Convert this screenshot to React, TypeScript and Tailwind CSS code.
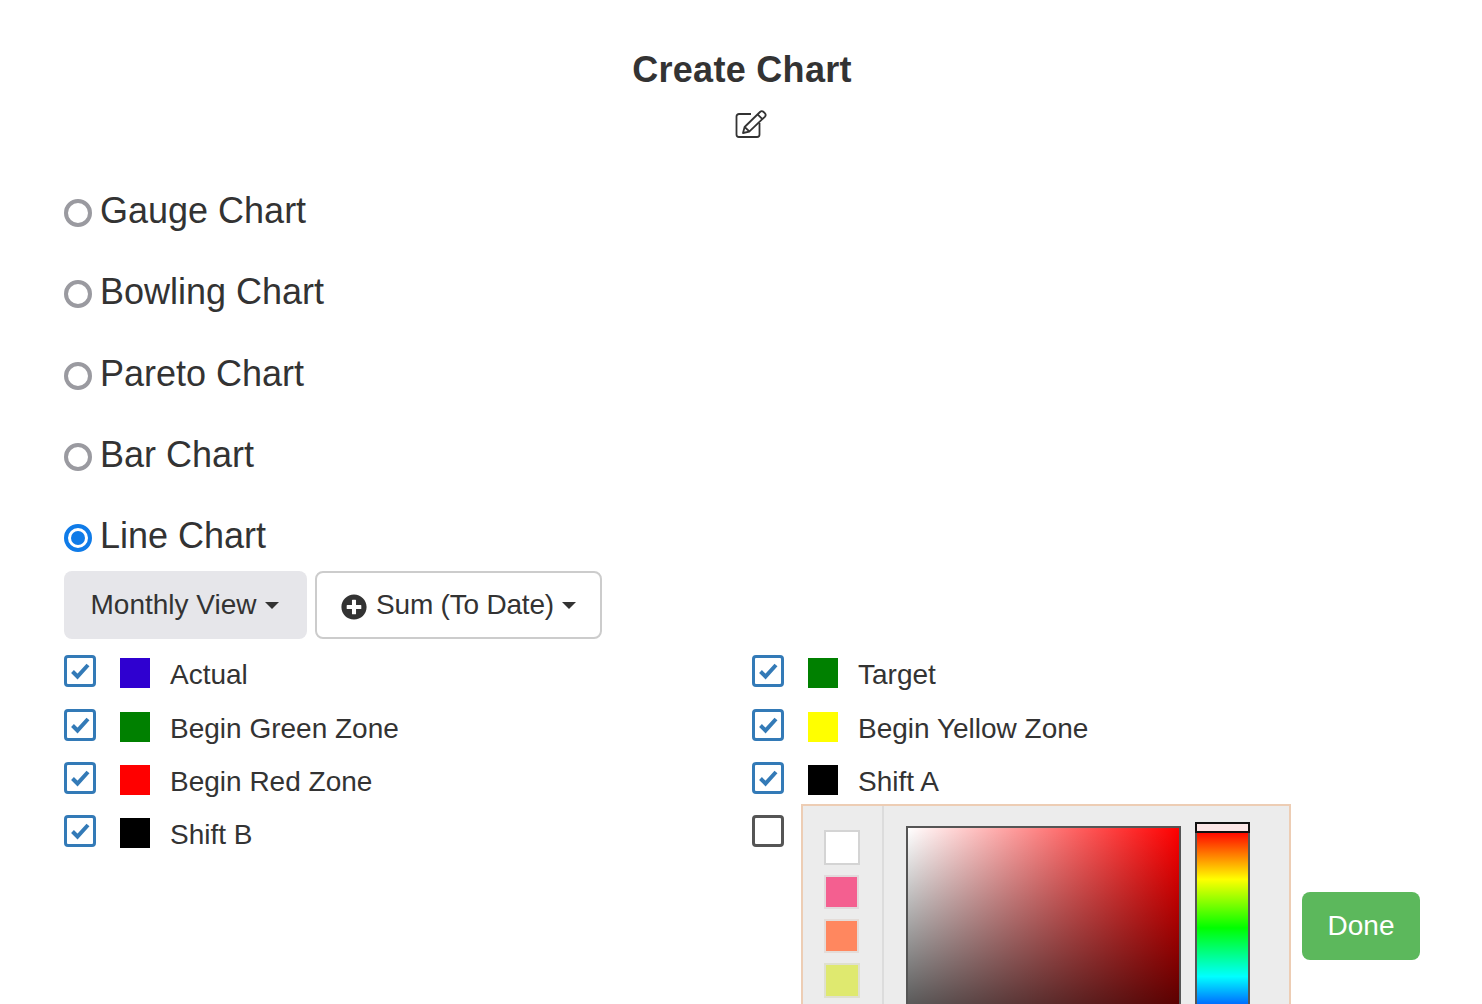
import React from 'react';
import { FaPlusCircle } from 'react-icons/fa';

const chartTypes = ['Gauge Chart', 'Bowling Chart', 'Pareto Chart', 'Bar Chart', 'Line Chart'];

const leftSeries = [
  { label: 'Actual', color: 'bg-[#2f00d0]' },
  { label: 'Begin Green Zone', color: 'bg-[#008000]' },
  { label: 'Begin Red Zone', color: 'bg-[#ff0000]' },
  { label: 'Shift B', color: 'bg-black' },
];

const rightSeries = [
  { label: 'Target', color: 'bg-[#008000]' },
  { label: 'Begin Yellow Zone', color: 'bg-[#ffff00]' },
  { label: 'Shift A', color: 'bg-black' },
];

const Caret = () => (
  <span className="ml-2 inline-block h-0 w-0 border-x-[7px] border-t-[7px] border-x-transparent border-t-[#333]" />
);

// pencil-in-a-box, the older outlined one
const EditIcon = () => (
  <svg viewBox="0 0 32 28" className="h-[28px] w-[32px]" fill="none" stroke="#333" strokeWidth="1.8" strokeLinejoin="round">
    <path d="M16 4H4a2.5 2.5 0 0 0-2.5 2.5v18A2.5 2.5 0 0 0 4 27h18a2.5 2.5 0 0 0 2.5-2.5V13" />
    <path d="M8 23l1.6-6L25 2a2.6 2.6 0 0 1 3.6 0l1.2 1.2a2.6 2.6 0 0 1 0 3.6L14.2 21.6z" />
    <path d="M22.6 4.4l4.8 4.8M9.6 17l5 4.6" />
  </svg>
);

const CheckBox = ({ checked = true }: { checked?: boolean }) => (
  <span
    className={`flex h-8 w-8 shrink-0 items-center justify-center rounded-[4px] border-[3px] bg-white ${
      checked ? 'border-[#337ab7]' : 'border-[#555]'
    }`}
  >
    {checked && (
      <svg viewBox="0 0 24 24" className="h-[24px] w-[24px]" fill="none" stroke="#337ab7" strokeWidth="4">
        <path d="M4.5 12.5l5 5L20 6" />
      </svg>
    )}
  </span>
);

const SeriesRow = ({ label, color }: { label: string; color: string }) => (
  <div className="flex h-[53.2px] items-start">
    <CheckBox />
    <span className={`ml-6 mt-[3px] h-[30px] w-[30px] shrink-0 ${color}`} />
    <span className="ml-5 mt-[2px] text-[28px] leading-9">{label}</span>
  </div>
);

const ColorPicker = () => (
  <div className="absolute left-[49px] top-[-11px] flex h-[260px] w-[490px] border-2 border-[#edcdb4] bg-[#ececec]">
    <div className="flex w-[81px] shrink-0 flex-col items-center gap-[10px] border-r-2 border-[#dcdcdc] pt-6">
      <span className="ml-[-2px] h-[35px] w-[36px] border-2 border-[#d4d4d4] bg-white" />
      <span className="ml-[-2px] h-[34px] w-[35px] border-2 border-[#e2d9dc] bg-[#f45f90]" />
      <span className="ml-[-2px] h-[34px] w-[35px] border-2 border-[#e4dcd8] bg-[#ff875f]" />
      <span className="ml-[-2px] h-[35px] w-[36px] border-2 border-[#dfe0cf] bg-[#dfe96f]" />
    </div>
    <div className="ml-[22px] mt-5 h-[275px] w-[275px] shrink-0 border-2 border-b-0 border-[#555] bg-[linear-gradient(to_top,#000,transparent),linear-gradient(to_right,#fff,#f00)]" />
    <div className="relative ml-[14px] mt-[16px] h-[300px] w-[55px] shrink-0">
      <div className="absolute inset-x-0 top-[9px] h-[291px] border-x-2 border-[#555] bg-[linear-gradient(to_bottom,#f00_0%,#ff0_16.6%,#0f0_33.3%,#0ff_50%,#00f_66.6%,#f0f_83.3%,#f00_100%)]" />
      <div className="absolute inset-x-0 top-0 h-[11px] border-2 border-[#111] bg-[#fbe6e6]" />
    </div>
  </div>
);

export default function App() {
  return (
    <div className="h-[1004px] overflow-hidden bg-white px-16 font-['Liberation_Sans',Arial,sans-serif] text-[#333]">
      <h1 className="pl-[2px] pt-[48px] text-center text-[36px] font-bold leading-[44px] tracking-[0.3px]">Create Chart</h1>
      <div className="mt-[18px] flex justify-center pl-[19px]">
        <EditIcon />
      </div>

      <div className="mt-[53px]">
        {chartTypes.map((name, i) => {
          const selected = i === chartTypes.length - 1;
          return (
            <div key={name} className="flex h-[81.3px] items-start">
              <span
                className={`mt-[8px] flex h-7 w-7 shrink-0 items-center justify-center rounded-full border-[4px] bg-white ${
                  selected ? 'border-[#0f7be8]' : 'border-[#9a9aa0]'
                }`}
              >
                {selected && <span className="h-[14px] w-[14px] rounded-full bg-[#0f7be8]" />}
              </span>
              <span className="ml-2 text-[36px] leading-10">{name}</span>
            </div>
          );
        })}
      </div>

      <div className="mt-[-26px] flex gap-2">
        <button className="flex h-[68px] w-[243px] items-center justify-center rounded-lg bg-[#e6e6ea] pr-[2px] text-[28px]">
          Monthly View
          <Caret />
        </button>
        <button className="flex h-[68px] w-[287px] items-center justify-center rounded-lg border-2 border-[#ccc] bg-white text-[28px] tracking-[-0.2px]">
          <FaPlusCircle className="mr-[9px] mt-[3px] h-[26px] w-[26px]" />
          Sum (To Date)
          <Caret />
        </button>
      </div>

      <div className="mt-4 grid grid-cols-[688px_1fr]">
        <div>
          {leftSeries.map((s) => (
            <SeriesRow key={s.label} {...s} />
          ))}
        </div>
        <div>
          {rightSeries.map((s) => (
            <SeriesRow key={s.label} {...s} />
          ))}
          <div className="relative flex">
            <CheckBox checked={false} />
            <ColorPicker />
            <button className="absolute left-[550px] top-[77px] flex h-[68px] w-[118px] items-center justify-center rounded-lg bg-[#5cb85c] text-[28px] text-white">
              Done
            </button>
          </div>
        </div>
      </div>
    </div>
  );
}
